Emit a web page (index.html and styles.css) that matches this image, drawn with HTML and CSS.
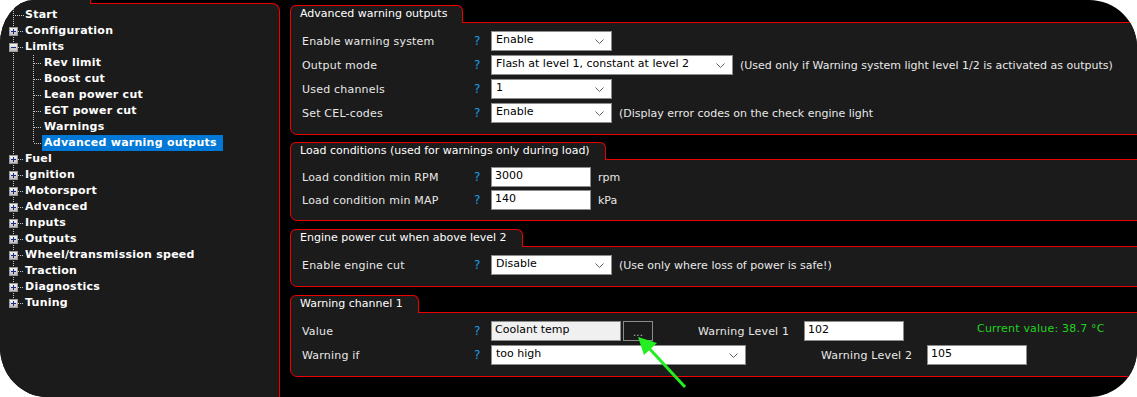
FILE: index.html
```html
<!DOCTYPE html>
<html lang="en">

<head>
    <meta charset="UTF-8">
    <meta name="viewport" content="width=device-width, initial-scale=1.0">
    <title>Advanced warning outputs</title>
    <link rel="stylesheet" href="styles.css">
</head>

<body>
    <div class="screen">

        <!-- Navigation tree -->
        <aside class="nav">
            <div class="nav-tab"></div>
            <div class="nav-body">
                <ul class="tree">
                    <li class="node"><div class="item"><span class="stub long"></span><span class="name">Start</span></div></li>
                    <li class="node"><div class="item"><span class="toggle plus"></span><span class="stub"></span><span class="name">Configuration</span></div></li>
                    <li class="node">
                        <div class="item"><span class="toggle"></span><span class="stub"></span><span class="name">Limits</span></div>
                        <ul class="sub">
                            <li class="leaf"><div class="item"><span class="stub"></span><span class="name">Rev limit</span></div></li>
                            <li class="leaf"><div class="item"><span class="stub"></span><span class="name">Boost cut</span></div></li>
                            <li class="leaf"><div class="item"><span class="stub"></span><span class="name">Lean power cut</span></div></li>
                            <li class="leaf"><div class="item"><span class="stub"></span><span class="name">EGT power cut</span></div></li>
                            <li class="leaf"><div class="item"><span class="stub"></span><span class="name">Warnings</span></div></li>
                            <li class="leaf"><div class="item"><span class="stub"></span><span class="name selected">Advanced warning outputs</span></div></li>
                        </ul>
                    </li>
                    <li class="node"><div class="item"><span class="toggle plus"></span><span class="stub"></span><span class="name">Fuel</span></div></li>
                    <li class="node"><div class="item"><span class="toggle plus"></span><span class="stub"></span><span class="name">Ignition</span></div></li>
                    <li class="node"><div class="item"><span class="toggle plus"></span><span class="stub"></span><span class="name">Motorsport</span></div></li>
                    <li class="node"><div class="item"><span class="toggle plus"></span><span class="stub"></span><span class="name">Advanced</span></div></li>
                    <li class="node"><div class="item"><span class="toggle plus"></span><span class="stub"></span><span class="name">Inputs</span></div></li>
                    <li class="node"><div class="item"><span class="toggle plus"></span><span class="stub"></span><span class="name">Outputs</span></div></li>
                    <li class="node"><div class="item"><span class="toggle plus"></span><span class="stub"></span><span class="name">Wheel/transmission speed</span></div></li>
                    <li class="node"><div class="item"><span class="toggle plus"></span><span class="stub"></span><span class="name">Traction</span></div></li>
                    <li class="node"><div class="item"><span class="toggle plus"></span><span class="stub"></span><span class="name">Diagnostics</span></div></li>
                    <li class="node"><div class="item"><span class="toggle plus"></span><span class="stub"></span><span class="name">Tuning</span></div></li>
                </ul>
            </div>
        </aside>

        <main class="main">

            <section class="group">
                <div class="group-tab">Advanced warning outputs</div>
                <div class="group-body">
                    <div class="row">
                        <span class="label">Enable warning system</span><span class="help">?</span>
                        <div class="select w120"><span>Enable</span><svg width="9" height="5" viewBox="0 0 9 5"><polyline points="0.5,0.5 4.5,4.5 8.5,0.5" /></svg></div>
                    </div>
                    <div class="row">
                        <span class="label">Output mode</span><span class="help">?</span>
                        <div class="select w242"><span>Flash at level 1, constant at level 2</span><svg width="9" height="5" viewBox="0 0 9 5"><polyline points="0.5,0.5 4.5,4.5 8.5,0.5" /></svg></div>
                        <span class="note">(Used only if Warning system light level 1/2 is activated as outputs)</span>
                    </div>
                    <div class="row">
                        <span class="label">Used channels</span><span class="help">?</span>
                        <div class="select w120"><span>1</span><svg width="9" height="5" viewBox="0 0 9 5"><polyline points="0.5,0.5 4.5,4.5 8.5,0.5" /></svg></div>
                    </div>
                    <div class="row">
                        <span class="label">Set CEL-codes</span><span class="help">?</span>
                        <div class="select w120"><span>Enable</span><svg width="9" height="5" viewBox="0 0 9 5"><polyline points="0.5,0.5 4.5,4.5 8.5,0.5" /></svg></div>
                        <span class="note">(Display error codes on the check engine light</span>
                    </div>
                </div>
            </section>

            <section class="group">
                <div class="group-tab">Load conditions (used for warnings only during load)</div>
                <div class="group-body tight">
                    <div class="row">
                        <span class="label">Load condition min RPM</span><span class="help">?</span>
                        <div class="field w100">3000</div>
                        <span class="note">rpm</span>
                    </div>
                    <div class="row">
                        <span class="label">Load condition min MAP</span><span class="help">?</span>
                        <div class="field w100">140</div>
                        <span class="note">kPa</span>
                    </div>
                </div>
            </section>

            <section class="group">
                <div class="group-tab">Engine power cut when above level 2</div>
                <div class="group-body">
                    <div class="row">
                        <span class="label">Enable engine cut</span><span class="help">?</span>
                        <div class="select w120"><span>Disable</span><svg width="9" height="5" viewBox="0 0 9 5"><polyline points="0.5,0.5 4.5,4.5 8.5,0.5" /></svg></div>
                        <span class="note">(Use only where loss of power is safe!)</span>
                    </div>
                </div>
            </section>

            <section class="group">
                <div class="group-tab">Warning channel 1</div>
                <div class="group-body">
                    <div class="row">
                        <span class="label">Value</span><span class="help">?</span>
                        <div class="field readonly w130">Coolant temp</div>
                        <div class="pick">...</div>
                        <span class="level first">Warning Level 1</span>
                        <div class="field w100">102</div>
                        <span class="current">Current value: 38.7 °C</span>
                    </div>
                    <div class="row">
                        <span class="label">Warning if</span><span class="help">?</span>
                        <div class="select w255"><span>too high</span><svg width="9" height="5" viewBox="0 0 9 5"><polyline points="0.5,0.5 4.5,4.5 8.5,0.5" /></svg></div>
                        <span class="level second">Warning Level 2</span>
                        <div class="field w100">105</div>
                    </div>
                </div>
            </section>

        </main>

        <!-- pointer drawn over the form -->
        <svg class="arrow" width="60" height="60" viewBox="0 0 60 60">
            <line x1="48" y1="50" x2="10" y2="9" />
            <polygon points="1,0 20,6 7,18" />
        </svg>
    </div>
</body>

</html>
```

FILE: styles.css
```css
* {
    margin: 0;
    padding: 0;
    box-sizing: border-box;
}

body {
    background: #fff;
    font-family: "DejaVu Sans", Verdana, sans-serif;
    font-size: 11px;
}

.screen {
    position: relative;
    display: flex;
    width: 1137px;
    height: 397px;
    background: #000;
    overflow: hidden;
    border-radius: 34px 48px 48px 47px / 44px 47px 47px 50px;
}

/* ---- navigation ---- */

.nav {
    width: 280px;
    flex-shrink: 0;
    display: flex;
    flex-direction: column;
}

.nav-tab {
    position: relative;
    z-index: 1;
    width: 91px;
    height: 4px;
    margin-bottom: -1px;
    background: #1b1b1b;
    border-right: 1px solid #e00;
}

.nav-body {
    flex: 1;
    background: #1b1b1b;
    border-top: 1px solid #e00;
    border-right: 1px solid #e00;
    border-top-right-radius: 8px;
    padding-top: 3px;
}

.tree,
.sub {
    list-style: none;
}

.node {
    background: repeating-linear-gradient(to bottom, #c8c8c8 0 1px, transparent 1px 2px) 13px 0 / 1px 100% no-repeat;
}

.node:first-child {
    background-position: 13px -4px;
    background-size: 1px calc(100% + 4px);
}

.node:last-child {
    background-size: 1px 8px;
}

.leaf {
    background: repeating-linear-gradient(to bottom, #c8c8c8 0 1px, transparent 1px 2px) 33px 0 / 1px 100% no-repeat;
}

.leaf:last-child {
    background-size: 1px 8px;
}

.item {
    display: flex;
    align-items: center;
    height: 16px;
    padding-left: 9px;
    color: #fff;
    font-weight: bold;
    letter-spacing: 0.25px;
    white-space: nowrap;
}

.leaf .item {
    padding-left: 34px;
}

.toggle {
    position: relative;
    width: 9px;
    height: 9px;
    background: linear-gradient(#f4f4f4, #bdbdbd);
    border: 1px solid #9a9a9a;
}

.toggle::before,
.toggle.plus::after {
    content: "";
    position: absolute;
    background: #1c2a80;
}

.toggle::before {
    left: 1px;
    top: 3px;
    width: 5px;
    height: 1px;
}

.toggle.plus::after {
    left: 3px;
    top: 1px;
    width: 1px;
    height: 5px;
}

.stub {
    width: 6px;
    height: 1px;
    margin-right: 1px;
    background: repeating-linear-gradient(to right, #c8c8c8 0 1px, transparent 1px 2px);
}

.stub.long {
    width: 11px;
    margin-left: 4px;
}

.leaf .stub {
    width: 8px;
    margin-right: 0;
}

.name {
    line-height: 16px;
}

.leaf .name {
    padding: 0 6px 0 2px;
}

.selected {
    background: #0078d7;
}

/* ---- form groups ---- */

.main {
    flex: 1;
    min-width: 0;
    padding: 5px 0 0 10px;
    display: flex;
    flex-direction: column;
    gap: 7px;
}

.group {
    width: 870px;
    display: flex;
    flex-direction: column;
    align-items: flex-start;
}

.group + .group + .group {
    margin-top: 1px;
}

.group-tab {
    position: relative;
    z-index: 1;
    height: 18px;
    margin-bottom: -1px;
    padding: 0 15px 1px 9px;
    background: #1b1b1b;
    border: 1px solid #e00;
    border-bottom: 0;
    border-radius: 6px 6px 0 0;
    color: #fff;
    line-height: 16px;
    white-space: nowrap;
}

.group-body {
    width: 100%;
    background: #1b1b1b;
    border: 1px solid #e00;
    border-radius: 0 0 7px 7px;
    padding: 8px 11px 11px;
    display: flex;
    flex-direction: column;
    gap: 4px;
}

.group-body.tight {
    padding: 7px 11px 10px;
    gap: 3px;
}

.row {
    display: flex;
    align-items: center;
    height: 20px;
    color: #e8e8e8;
    letter-spacing: 0.2px;
    white-space: nowrap;
}

.label {
    width: 172px;
    flex-shrink: 0;
}

.help {
    width: 17px;
    flex-shrink: 0;
    color: #1c9be8;
    font-size: 12px;
}

.select,
.field {
    height: 20px;
    flex-shrink: 0;
    background: #fff;
    border: 1px solid #8c8c8c;
    color: #000;
    letter-spacing: 0;
    line-height: 16px;
}

.select {
    display: flex;
    align-items: center;
    justify-content: space-between;
    padding: 0 7px 2px 4px;
}

.select svg {
    margin-top: 2px;
    fill: none;
    stroke: #606060;
    stroke-width: 1;
}

.field {
    padding: 0 3px 2px;
}

.field.readonly {
    background: #f0f0f0;
}

.w100 { width: 100px; }
.w120 { width: 121px; }
.w130 { width: 130px; }
.w242 { width: 242px; }
.w255 { width: 255px; }

.note {
    margin-left: 7px;
    letter-spacing: 0;
}

.pick {
    width: 30px;
    height: 20px;
    margin-left: 2px;
    border: 1px solid #8c8c8c;
    color: #bbb;
    text-align: center;
    line-height: 22px;
    font-size: 10px;
}

.level {
    width: 106px;
    flex-shrink: 0;
}

.level.first {
    margin-left: 45px;
}

.level.second {
    margin-left: 75px;
}

.current {
    margin-left: 73px;
    margin-bottom: 5px;
    color: #21d321;
}

.arrow {
    position: absolute;
    left: 637px;
    top: 337px;
    overflow: visible;
}

.arrow line {
    stroke: #22ee22;
    stroke-width: 3;
}

.arrow polygon {
    fill: #22ee22;
}
```
